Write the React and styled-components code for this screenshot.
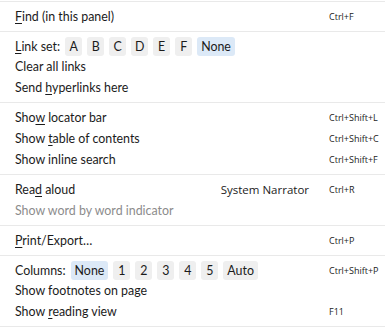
import React from "react";
import styled, { createGlobalStyle } from "styled-components";

const GlobalStyle = createGlobalStyle`
  html, body {
    margin: 0;
    padding: 0;
    background: #ffffff;
  }
  body {
    font-family: Lato, "Noto Sans", sans-serif;
    color: #1b1b1b;
  }
`;

const Menu = styled.div`
  width: 385px;
  padding-top: 1px;
`;

const Section = styled.div`
  border-top: 1px solid #e9e9e9;
  border-bottom: ${(p) => (p.$last ? "1px solid #e9e9e9" : "none")};
  padding: 4px 0;
`;

const Row = styled.div`
  display: flex;
  align-items: center;
  height: ${(p) => (p.$picker ? "20px" : "21px")};
  padding-left: 15px;
  font-size: 12.4px;
  color: ${(p) => (p.$disabled ? "#8c8c8c" : "#1b1b1b")};
  white-space: nowrap;
`;

const Label = styled.span`
  flex: 1;
  display: flex;
  align-items: center;
`;

const Value = styled.span`
  font-family: "Open Sans", sans-serif;
  font-size: 11.5px;
  margin-right: 20px;
`;

const Shortcut = styled.span`
  width: 56px;
  font-family: "Open Sans", sans-serif;
  font-size: 9px;
  color: #1b1b1b;
`;

const Key = styled.u`
  text-decoration-thickness: 1px;
  text-underline-offset: 2px;
`;

const Chips = styled.span`
  display: flex;
  gap: 5px;
  margin-left: 5px;
`;

const Chip = styled.span`
  display: inline-flex;
  align-items: center;
  justify-content: center;
  width: ${(p) => (p.$wide ? "auto" : "17px")};
  height: 19px;
  padding: 0 ${(p) => (p.$wide ? "4px" : "0")};
  box-sizing: border-box;
  border-radius: 3px;
  background: ${(p) => (p.$active ? "#dce9f7" : "#efefef")};
  font-size: 12.4px;
`;

const Picker = ({ label, options, active }) => (
  <Label>
    {label}
    <Chips>
      {options.map((o) => (
        <Chip key={o} $active={o === active} $wide={o.length > 1}>
          {o}
        </Chip>
      ))}
    </Chips>
  </Label>
);

export default function App() {
  return (
    <>
      <GlobalStyle />
      <Menu>
        <Section>
          <Row>
            <Label>
              <span>
                <Key>F</Key>ind (in this panel)
              </span>
            </Label>
            <Shortcut>Ctrl+F</Shortcut>
          </Row>
        </Section>
        <Section>
          <Row $picker>
            <Picker
              label={
                <span>
                  <Key>L</Key>ink set:
                </span>
              }
              options={["A", "B", "C", "D", "E", "F", "None"]}
              active="None"
            />
          </Row>
          <Row>
            <Label>Clear all links</Label>
          </Row>
          <Row>
            <Label>
              <span>
                Send <Key>h</Key>yperlinks here
              </span>
            </Label>
          </Row>
        </Section>
        <Section>
          <Row>
            <Label>
              <span>
                Sho<Key>w</Key> locator bar
              </span>
            </Label>
            <Shortcut>Ctrl+Shift+L</Shortcut>
          </Row>
          <Row>
            <Label>
              <span>
                Show <Key>t</Key>able of contents
              </span>
            </Label>
            <Shortcut>Ctrl+Shift+C</Shortcut>
          </Row>
          <Row>
            <Label>Show inline search</Label>
            <Shortcut>Ctrl+Shift+F</Shortcut>
          </Row>
        </Section>
        <Section>
          <Row>
            <Label>
              <span>
                Rea<Key>d</Key> aloud
              </span>
            </Label>
            <Value>System Narrator</Value>
            <Shortcut>Ctrl+R</Shortcut>
          </Row>
          <Row $disabled>
            <Label>Show word by word indicator</Label>
          </Row>
        </Section>
        <Section>
          <Row>
            <Label>
              <span>
                <Key>P</Key>rint/Export…
              </span>
            </Label>
            <Shortcut>Ctrl+P</Shortcut>
          </Row>
        </Section>
        <Section $last>
          <Row $picker>
            <Picker
              label="Columns:"
              options={["None", "1", "2", "3", "4", "5", "Auto"]}
              active="None"
            />
            <Shortcut>Ctrl+Shift+P</Shortcut>
          </Row>
          <Row>
            <Label>Show footnotes on page</Label>
          </Row>
          <Row>
            <Label>
              <span>
                Show <Key>r</Key>eading view
              </span>
            </Label>
            <Shortcut>F11</Shortcut>
          </Row>
        </Section>
      </Menu>
    </>
  );
}
